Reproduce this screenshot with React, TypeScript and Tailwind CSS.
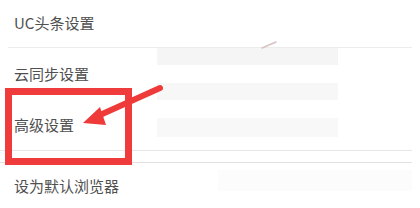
function Row({ label, className = "" }: { label: string; className?: string }) {
  return (
    <div className={`flex items-center px-[14px] text-[15px] text-[#505050] ${className}`}>
      {label}
    </div>
  );
}

function Arrow() {
  return (
    <svg
      className="absolute left-0 top-0 pointer-events-none"
      width={420}
      height={208}
      viewBox="0 0 420 208"
      aria-hidden
    >
      <line x1={160} y1={88} x2={100} y2={115} stroke="#ef3a3a" strokeWidth={6} strokeLinecap="round" />
      <polygon points="83,123 100,107 106,125" fill="#ef3a3a" />
      <line x1={262} y1={48} x2={276} y2={42} stroke="#d8c2c2" strokeWidth={1.5} strokeLinecap="round" />
    </svg>
  );
}

export default function App() {
  return (
    <div
      className="relative w-[420px] h-[208px] overflow-hidden bg-white"
      style={{ fontFamily: '"Noto Sans CJK SC", "Noto Sans", sans-serif' }}
    >
      {/* blurred blocks left over in the source screenshot */}
      <div className="absolute left-[157px] top-[48px] w-[181px] h-[17px] bg-[#f5f5f5]" />
      <div className="absolute left-[157px] top-[83px] w-[181px] h-[17px] bg-[#f7f7f7]" />
      <div className="absolute left-[157px] top-[118px] w-[181px] h-[19px] bg-[#f8f8f8]" />
      <div className="absolute left-[218px] top-[170px] w-[194px] h-[21px] bg-[#fcfcfc]" />

      <div className="flex flex-col">
        <Row label="UC头条设置" className="h-[47px]" />
        <div className="mx-[8px] h-px bg-[#ececec]" />
        <Row label="云同步设置" className="h-[52px]" />
        <Row label="高级设置" className="h-[50px]" />
        <div className="mr-[8px] h-px bg-[#e6e6e6]" />
        <div className="mr-[8px] h-[12px] border-b border-[#e2e2e2]" />
        <Row label="设为默认浏览器" className="h-[46px]" />
      </div>

      <div className="absolute left-[5px] top-[88px] w-[127px] h-[77px] border-[7px] border-[#ef3b3b]" />
      <Arrow />
    </div>
  );
}
